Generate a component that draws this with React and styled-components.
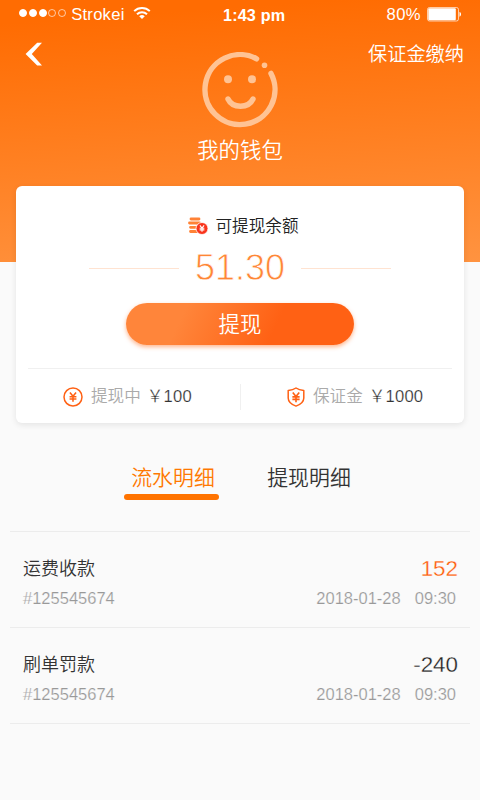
import styled, { createGlobalStyle, css } from "styled-components";

const GlobalStyle = createGlobalStyle`
	* {
		box-sizing: border-box;
	}

	body {
		background: #fafafa;
		font-family: "Liberation Sans", "Noto Sans CJK SC", sans-serif;
		font-weight: 350;
		margin: 0;
	}
`;

const Page = styled.div`
	height: 800px;
	margin: 0 auto;
	overflow: hidden;
	width: 480px;
`;

const Hero = styled.header`
	background: linear-gradient(176deg, #ff6c02 8%, #ff9340 100%);
	color: #fff;
	height: 262px;
`;

const StatusBar = styled.div`
	align-items: center;
	display: grid;
	font-size: 16.6px;
	font-weight: 400;
	grid-template-columns: 204px auto 1fr;
	height: 28px;
	line-height: 28px;
	padding: 0 16px 0 19px;
`;

const Signal = styled.div`
	display: flex;
	gap: 1.8px;
	margin-right: 5px;
`;

const Dot = styled.i`
	background: ${(props) => (props.$on ? "#fff" : "transparent")};
	border: 1px solid ${(props) => (props.$on ? "#fff" : "#ffffffa0")};
	border-radius: 50%;
	height: 8px;
	margin-top: -3px;
	width: 8px;
`;

const StatusSide = styled.div`
	align-items: center;
	display: flex;
	justify-content: ${(props) => (props.$end ? "flex-end" : "flex-start")};

	svg {
		margin-top: ${(props) => (props.$end ? 0 : -4)}px;
	}
`;

const Carrier = styled.span`
	letter-spacing: 0.25px;
	margin-right: 8px;
`;

const Clock = styled.b`
	font-size: 16.2px;
	letter-spacing: 0.15px;
	line-height: 26px;
`;

const Percent = styled.span`
	letter-spacing: 0.4px;
	margin-right: 6px;
	padding-top: 1px;
`;

const NavBar = styled.nav`
	align-items: center;
	display: flex;
	height: 24px;
	justify-content: space-between;
	margin-top: 14px;
	padding: 0 16px 0 25px;
`;

const PlainButton = styled.button`
	background: none;
	border: 0;
	color: inherit;
	display: flex;
	font: inherit;
	padding: 0;
`;

const DepositLink = styled(PlainButton)`
	font-size: 19.2px;
	line-height: 22px;
	padding-top: 2px;
`;

const Profile = styled.div`
	align-items: center;
	display: flex;
	flex-direction: column;
	margin-top: -14px;
`;

const Title = styled.h1`
	font-size: 21.4px;
	font-weight: inherit;
	line-height: 30px;
	margin: 8px 0 0;
`;

const Card = styled.section`
	background: #fff;
	border-radius: 6px;
	box-shadow: 0 2px 6px rgba(0, 0, 0, 0.09);
	height: 237px;
	margin: -76px 16px 0;
	padding-top: 26px;
	position: relative;
`;

const BalanceLabel = styled.div`
	align-items: center;
	color: #222;
	display: flex;
	font-size: 16.6px;
	gap: 8px;
	height: 28px;
	justify-content: center;
	line-height: 28px;
	padding-left: 6px;
	padding-top: 1px;

	svg {
		margin-top: -2px;
	}
`;

const Balance = styled.div`
	align-items: center;
	color: #ff8636;
	display: flex;
	font-size: 36px;
	height: 40px;
	justify-content: space-between;
	line-height: 40px;
	margin: 8px 73px 0;

	&::before,
	&::after {
		background: #ffe3d1;
		content: "";
		height: 1px;
		width: 90px;
	}
`;

const BalanceValue = styled.span`
	-webkit-text-stroke: 0.8px #fff;
`;

const WithdrawButton = styled.button`
	background: linear-gradient(115deg, #ff853a 25%, #ff6114 65%);
	border: 0;
	border-radius: 21px;
	box-shadow: 0 2px 4px rgba(255, 110, 30, 0.5);
	color: #fff;
	display: block;
	font: inherit;
	font-size: 21.4px;
	height: 42px;
	line-height: 42px;
	margin: 15px auto 0;
	padding: 1px 0 0;
	width: 228px;
`;

const Stats = styled.div`
	border-top: 1px solid #f0f0f0;
	display: flex;
	height: 56px;
	margin: 23px 12px 0;
`;

const Stat = styled.div`
	align-items: center;
	color: #aaa;
	display: flex;
	font-size: 16.6px;
	line-height: 26px;
	padding-left: ${(props) => props.$indent}px;
	position: relative;
	width: 50%;

	&:last-child::before {
		background: #f0f0f0;
		content: "";
		height: 26px;
		left: 0;
		position: absolute;
		top: 15px;
		width: 1px;
	}

	svg {
		flex: none;
		margin-right: 8px;
	}
`;

const StatValue = styled.span`
	-webkit-text-stroke: 0.2px #fff;
	color: #333;
	letter-spacing: 0.2px;
	margin-left: 6px;
	white-space: nowrap;
`;

const Tabs = styled.div`
	display: flex;
	gap: 41px;
	margin: 39px 0 0 124px;
`;

const Tab = styled.button`
	background: none;
	border: 0;
	color: #333;
	display: flex;
	flex-direction: column;
	font: inherit;
	font-size: 20.9px;
	height: 38px;
	justify-content: space-between;
	line-height: 32px;
	padding: 0;
	width: 95px;

	span {
		align-self: center;
		padding-right: 0;
		margin-left: 3px;
	}

	${(props) =>
		props.$active &&
		css`
			color: #ff7800;

			&::after {
				background: #ff7300;
				border-radius: 3px;
				content: "";
				height: 6px;
				width: 100%;
			}
		`}
`;

const Records = styled.ul`
	border-top: 1px solid #ececec;
	list-style: none;
	margin: 31px 10px 0;
	padding: 0;
`;

const Record = styled.li`
	border-bottom: 1px solid #ececec;
	height: 96px;
	padding: 22px 12px 0 13px;
`;

const RecordLine = styled.div`
	align-items: center;
	color: ${(props) => (props.$muted ? "#999" : "#333")};
	display: flex;
	font-size: ${(props) => (props.$muted ? 16.5 : 18)}px;
	height: ${(props) => (props.$muted ? 30 : 29)}px;
	justify-content: space-between;
	line-height: 30px;
	padding-right: ${(props) => (props.$muted ? 2 : 0)}px;
`;

const RecordMeta = styled.span`
	-webkit-text-stroke: 0.2px #fafafa;
`;

const Amount = styled.span`
	-webkit-text-stroke: 0.3px #fafafa;
	color: ${(props) => (props.$income ? "#ff5c08" : "#222")};
	font-size: 22.4px;
	line-height: 28px;
`;

const Time = styled.span`
	margin-left: 14px;
`;

const WifiIcon = () => (
	<svg width="18" height="14" viewBox="0 0 18 14" fill="none" stroke="#fff" strokeWidth="2">
		<path d="M1.2 5.1a11.2 11.2 0 0 1 15.6 0" />
		<path d="M4 8.3a7.2 7.2 0 0 1 10 0" />
		<path d="M9 13 6.2 10.3a4 4 0 0 1 5.6 0z" fill="#fff" stroke="none" />
	</svg>
);

const BatteryIcon = () => (
	<svg width="37" height="15" viewBox="0 0 37 15" fill="none">
		<rect x=".5" y=".5" width="31" height="13.5" rx="2" stroke="#fff" strokeOpacity=".65" />
		<rect x="1.3" y="1.2" width="27.5" height="12" rx="1" fill="#fff" />
		<path d="M32.5 5c2 .4 2 4.2 0 4.7z" fill="#fff" />
	</svg>
);

const BackIcon = () => (
	<svg width="18" height="24" viewBox="0 0 18 24" fill="#fff">
		<path d="M12.2 .8H17L6.8 12 17 23.5H12.2L.6 12z" />
	</svg>
);

const SmileIcon = () => (
	<svg width="76" height="76" viewBox="0 0 76 76" fill="none" stroke="#ffc394" strokeWidth="5.4" strokeLinecap="round">
		<path d="M54.6 6.8A35 35 0 1 0 69 21.4" />
		<path d="M26 47c4.5 9.6 20.5 9.6 25 0" />
		<g fill="#ffc394" stroke="none">
			<circle cx="26" cy="27.2" r="4" />
			<circle cx="50" cy="27.2" r="4" />
			<circle cx="62.5" cy="13.2" r="2.8" />
		</g>
	</svg>
);

const Yen = ({ x, y, scale = 1, ...props }) => (
	<path
		d="M-3.4-5 0-.8 3.4-5M0-.8V5.2M-3.8-.4H3.8M-3.8 2.3H3.8"
		transform={`translate(${x} ${y}) scale(${scale})`}
		{...props}
	/>
);

const CoinsIcon = () => (
	<svg width="20" height="18" viewBox="0 0 20 18" fill="none">
		<path d="M3 2h8M1.5 6h10M2.5 10.3h7M2.5 14.5h7" stroke="#ff8236" strokeWidth="2.8" strokeLinecap="round" />
		<circle cx="14" cy="11.5" r="6" fill="#f9341c" stroke="#fff" strokeWidth=".8" />
		<Yen x={14} y={11.5} scale={0.62} stroke="#fff" strokeWidth="1.8" />
	</svg>
);

const CoinIcon = () => (
	<svg width="20" height="20" viewBox="0 0 20 20" fill="none" stroke="#ff6114" strokeWidth="1.5">
		<circle cx="10" cy="10" r="9" />
		<Yen x={10} y={10} scale={0.9} strokeWidth="1.7" />
	</svg>
);

const ShieldIcon = () => (
	<svg width="18" height="20" viewBox="0 0 18 20" fill="none" stroke="#ff6114" strokeWidth="1.5" strokeLinejoin="round">
		<path d="M9 1C7 2.5 4 3.3 1.2 3.4V11c0 4 3.5 6.5 7.8 8.1 4.3-1.6 7.8-4.1 7.8-8.1V3.4C14 3.3 11 2.5 9 1z" />
		<Yen x={9} y={10.2} scale={0.95} strokeWidth="1.7" />
	</svg>
);

const records = [
	{ title: "运费收款", amount: "152", income: true },
	{ title: "刷单罚款", amount: "-240", income: false },
];

const App = () => (
	<Page>
		<GlobalStyle />
		<Hero>
			<StatusBar>
				<StatusSide>
					<Signal>
						<Dot $on />
						<Dot $on />
						<Dot $on />
						<Dot />
						<Dot />
					</Signal>
					<Carrier>Strokei</Carrier>
					<WifiIcon />
				</StatusSide>
				<Clock>1:43 pm</Clock>
				<StatusSide $end>
					<Percent>80%</Percent>
					<BatteryIcon />
				</StatusSide>
			</StatusBar>
			<NavBar>
				<PlainButton aria-label="返回">
					<BackIcon />
				</PlainButton>
				<DepositLink>保证金缴纳</DepositLink>
			</NavBar>
			<Profile>
				<SmileIcon />
				<Title>我的钱包</Title>
			</Profile>
		</Hero>
		<Card>
			<BalanceLabel>
				<CoinsIcon />
				可提现余额
			</BalanceLabel>
			<Balance>
				<BalanceValue>51.30</BalanceValue>
			</Balance>
			<WithdrawButton>提现</WithdrawButton>
			<Stats>
				<Stat $indent={35}>
					<CoinIcon />
					提现中
					<StatValue>￥100</StatValue>
				</Stat>
				<Stat $indent={47}>
					<ShieldIcon />
					保证金
					<StatValue>￥1000</StatValue>
				</Stat>
			</Stats>
		</Card>
		<Tabs>
			<Tab $active>
				<span>流水明细</span>
			</Tab>
			<Tab>
				<span>提现明细</span>
			</Tab>
		</Tabs>
		<Records>
			{records.map((record) => (
				<Record key={record.title}>
					<RecordLine>
						{record.title}
						<Amount $income={record.income}>{record.amount}</Amount>
					</RecordLine>
					<RecordLine $muted>
						<RecordMeta>#125545674</RecordMeta>
						<RecordMeta>
							2018-01-28<Time>09:30</Time>
						</RecordMeta>
					</RecordLine>
				</Record>
			))}
		</Records>
	</Page>
);

export default App;
